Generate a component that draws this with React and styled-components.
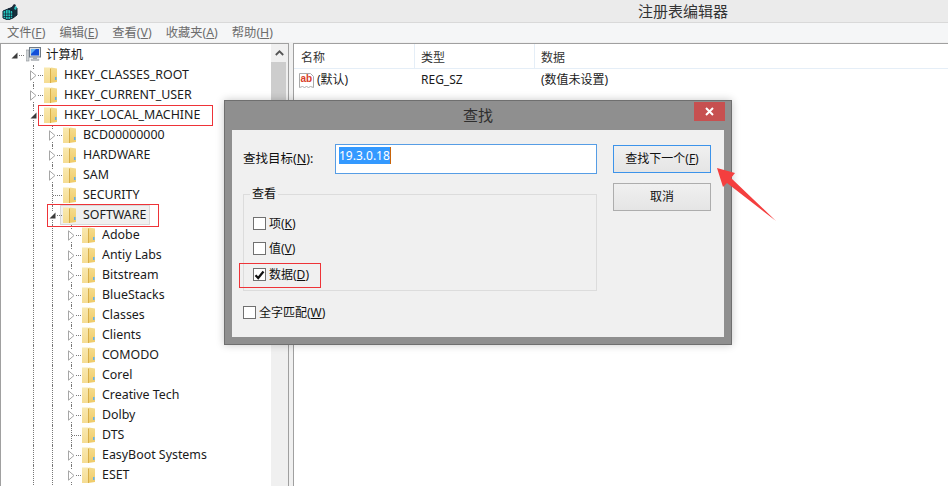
import React from 'react'
import styled, { createGlobalStyle } from 'styled-components'

const GlobalStyle = createGlobalStyle`
  html, body { margin: 0; padding: 0; background: #fff; }
  body { font-family: "Noto Sans", "Noto Sans CJK SC", sans-serif; }
`

const FONT = '"Noto Sans", "Noto Sans CJK SC", sans-serif'

const Screen = styled.div`
  position: relative;
  width: 948px;
  height: 486px;
  overflow: hidden;
  display: flex;
  flex-direction: column;
  background: #f0f0f0;
  font: 13px/18px ${FONT};
  color: #1a1a1a;
`

const TitleBar = styled.div`
  height: 22px;
  flex: none;
  display: flex;
  align-items: center;
  padding-left: 2px;
  background: #ebebeb;
  border-bottom: 1px solid #d9d9d9;
`

const Title = styled.div`
  margin-left: 620px;
  font-size: 15px;
  color: #333;
`

const MenuBar = styled.div`
  height: 19px;
  flex: none;
  display: flex;
  align-items: center;
  gap: 14px;
  padding-left: 7px;
  background: #f5f6f7;
  color: #6d6d6d;
  font-size: 12.3px;
`

const Panes = styled.div`
  flex: 1;
  min-height: 0;
  margin-top: 1px;
  display: flex;
`

const TreePane = styled.div`
  width: 287px;
  flex: none;
  display: flex;
  background: #fff;
  border-left: 1px solid #a0a0a0;
  border-top: 1px solid #a0a0a0;
  border-right: 1px solid #a0a0a0;
`

const Tree = styled.div`
  flex: 1;
  min-width: 0;
  padding-top: 1px;
  overflow: hidden;
`

const Row = styled.div`
  height: 20px;
  display: flex;
  align-items: stretch;
  padding-left: ${p => (p.$depth > 0 ? 23 : 4)}px;
`

const Guide = styled.span`
  position: relative;
  width: 19px;
  flex: none;
  &::before {
    content: '';
    position: absolute;
    left: 9px;
    top: 0;
    bottom: 0;
    border-left: 1px dotted #777;
  }
`

const Toggle = styled.span`
  position: relative;
  width: 19px;
  flex: none;
  display: flex;
  align-items: center;
  justify-content: center;
  &::before {
    content: '';
    position: absolute;
    left: 9px;
    top: ${p => (p.$line ? 0 : '50%')};
    bottom: ${p => (p.$line ? 0 : '50%')};
    border-left: 1px dotted #777;
  }
  &::after {
    content: '';
    position: absolute;
    left: 10px;
    right: 0;
    top: 50%;
    border-top: 1px dotted #777;
  }
  svg {
    position: relative;
    z-index: 1;
    background: #fff;
  }
`

const Item = styled.span`
  display: inline-flex;
  align-items: center;
  gap: 7px;
  box-sizing: border-box;
  height: 20px;
  margin-left: -2px;
  padding: 0 4px 0 3px;
  font-size: 12.4px;
  color: #1a1a1a;
  background: ${p => (p.$selected ? '#f0f0f0' : 'transparent')};
  outline: ${p => (p.$selected ? '1px solid #d9d9d9' : 'none')};
  outline-offset: -1px;
  white-space: nowrap;
`

const RootItem = styled(Item)`
  gap: 5px;
  margin-left: 0;
  padding: 0;
`

const Scrollbar = styled.div`
  width: 17px;
  flex: none;
  display: flex;
  flex-direction: column;
  background: #f0f0f0;
`

const ScrollUp = styled.div`
  height: 18px;
  display: flex;
  align-items: center;
  justify-content: center;
`

const ScrollThumb = styled.div`
  width: 15px;
  height: 140px;
  background: #cdcdcd;
`

const Splitter = styled.div`
  width: 4px;
  flex: none;
  background: #f0f0f0;
`

const ListPane = styled.div`
  flex: 1;
  min-width: 0;
  background: #fff;
  border-left: 1px solid #a0a0a0;
  border-top: 1px solid #a0a0a0;
`

const ListHeader = styled.div`
  height: 24px;
  display: grid;
  grid-template-columns: 121px 120px 1fr;
  border-bottom: 1px solid #e5eef7;
`

const HeaderCell = styled.div`
  display: flex;
  align-items: center;
  padding: 4px 0 0 6px;
  font-size: 12px;
  color: #333;
  border-right: ${p => (p.$last ? 'none' : '1px solid #e5eef7')};
  &:first-child {
    padding-left: 7px;
  }
`

const ListRow = styled.div`
  height: 21px;
  display: grid;
  grid-template-columns: 121px 120px 1fr;
  font-size: 12px;
`

const NameCell = styled.div`
  display: flex;
  align-items: center;
  gap: 2px;
  padding-left: 5px;
`

const ValueCell = styled.div`
  display: flex;
  align-items: center;
  padding-left: 6px;
`

const Dialog = styled.div`
  position: absolute;
  left: 224px;
  top: 100px;
  width: 508px;
  height: 245px;
  box-sizing: border-box;
  display: flex;
  flex-direction: column;
  background: #8f8f8f;
  border: 1px solid #6f6f6f;
  box-shadow: 0 0 8px rgba(0, 0, 0, 0.22);
`

const DialogTitle = styled.div`
  position: relative;
  height: 29px;
  box-sizing: border-box;
  flex: none;
  display: flex;
  align-items: center;
  justify-content: center;
  padding-bottom: 2px;
  font-size: 15px;
  color: #2e2e2e;
`

const CloseButton = styled.div`
  position: absolute;
  right: 6px;
  top: 1px;
  width: 31px;
  height: 19px;
  display: flex;
  align-items: center;
  justify-content: center;
  background: #c75050;
`

const DialogBody = styled.div`
  flex: 1;
  margin: 0 7px 7px;
  padding: 14px 13px 0 11px;
  display: grid;
  grid-template-columns: 354px 98px;
  column-gap: 16px;
  align-content: start;
  background: #f0f0f0;
`

const SearchRow = styled.div`
  display: flex;
  align-items: center;
`

const SearchLabel = styled.label`
  width: 92px;
  flex: none;
  font-size: 12.5px;
  color: #111;
`

const SearchBox = styled.div`
  flex: 1;
  height: 30px;
  box-sizing: border-box;
  padding: 2px 3px;
  background: #fff;
  border: 1px solid #569de5;
  font-size: 12px;
  line-height: 17px;
`

const Selected = styled.span`
  display: inline-block;
  height: 17px;
  background: #3399ff;
  color: #fff;
  border-right: 1px solid #c8640a;
`

const Group = styled.div`
  position: relative;
  height: 97px;
  box-sizing: border-box;
  margin-top: 20px;
  padding: 22px 0 0 9px;
  border: 1px solid #dcdcdc;
`

const GroupLegend = styled.span`
  position: absolute;
  left: 6px;
  top: -9px;
  padding: 0 2px;
  background: #f0f0f0;
  font-size: 12px;
  line-height: 16px;
  color: #111;
`

const CheckRow = styled.div`
  display: flex;
  align-items: center;
  gap: 3px;
  height: 13px;
  margin-top: ${p => p.$top || 0}px;
  font-size: 12px;
  color: #111;
`

const CheckBox = styled.span`
  width: 13px;
  height: 13px;
  flex: none;
  box-sizing: border-box;
  display: flex;
  align-items: center;
  justify-content: center;
  background: #fff;
  border: 1px solid #707070;
`

const Buttons = styled.div`
  display: flex;
  flex-direction: column;
  gap: 10px;
  padding-top: 1px;
`

const Button = styled.div`
  height: 28px;
  box-sizing: border-box;
  display: flex;
  align-items: center;
  justify-content: center;
  font-size: 12px;
  color: #111;
  background: linear-gradient(#f0f0f0, #e5e5e5);
  border: ${p => (p.$primary ? '1px solid #3c93ea' : '1px solid #adadad')};
`

const Callout = styled.div`
  position: absolute;
  left: ${p => p.$x}px;
  top: ${p => p.$y}px;
  width: ${p => p.$w}px;
  height: ${p => p.$h}px;
  box-sizing: border-box;
  border: 1px solid #ee3338;
`

const Arrow = styled.svg`
  position: absolute;
  left: 712px;
  top: 162px;
`

const AppIcon = () => (
  <svg width="16" height="17" viewBox="0 0 16 17">
    <path d="M1 8l5-2 5 2v7l-5 2-5-2z" fill="#22c4bc" stroke="#123" strokeWidth="1" />
    <path d="M6 6l5-2 4 1v7l-4 3V8z" fill="#14303c" stroke="#123" strokeWidth="1" />
    <path d="M1 11l10 0M6 6v11M3.5 7v9M8.5 7v9M1 13.5h10" stroke="#123" strokeWidth="0.7" />
    <path d="M9 5l3-4 2 1-2 4z" fill="#1b2a3a" />
    <path d="M13 3l2 1-1 3-2-1z" fill="#2bb" />
  </svg>
)

const Computer = () => (
  <svg width="15" height="16" viewBox="0 0 15 16" style={{ marginLeft: 2 }}>
    <rect x="0" y="3" width="3" height="11" fill="#cfd3d6" stroke="#8a8f93" strokeWidth="0.6" />
    <rect x="3.5" y="0.5" width="11" height="9.5" fill="#d9dde0" stroke="#6f7a85" />
    <rect x="5" y="2" width="8" height="6.5" fill="#1450d8" />
    <path d="M5 2h5l-5 5z" fill="#5fb0f5" />
    <rect x="7" y="10" width="4" height="2" fill="#a9afb5" />
    <rect x="5" y="12" width="8" height="1.6" fill="#c5c9cd" stroke="#8f959a" strokeWidth="0.4" />
  </svg>
)

const Folder = () => (
  <svg width="13" height="16" viewBox="0 0 13 16">
    <defs>
      <linearGradient id="folderBack" x1="0" y1="0" x2="0" y2="1">
        <stop offset="0" stopColor="#f9e9b0" />
        <stop offset="1" stopColor="#f5dc92" />
      </linearGradient>
      <linearGradient id="folderFront" x1="0" y1="0" x2="0" y2="1">
        <stop offset="0" stopColor="#f5dc8e" />
        <stop offset="1" stopColor="#efcb68" />
      </linearGradient>
    </defs>
    <path d="M0 0.5h6l1 1v14.5h-7z" fill="url(#folderBack)" />
    <path d="M6 2l1-1.5 6 1v13.5l-7 1z" fill="url(#folderFront)" />
    <path d="M6.5 1.5v14.5" stroke="#d7ae4a" strokeWidth="1" />
    <rect x="11" y="10" width="1.5" height="3" fill="#62b0e6" />
  </svg>
)

const Collapsed = () => (
  <svg width="7" height="11" viewBox="0 0 7 11">
    <path d="M0.5 0.8L6 5.5 0.5 10.2z" fill="#fff" stroke="#a6a6a6" />
  </svg>
)

const Expanded = () => (
  <svg width="7" height="7" viewBox="0 0 7 7">
    <path d="M6.5 0.5V6.5H0.5z" fill="#3c3c3c" />
  </svg>
)

const Chevron = () => (
  <svg width="9" height="6" viewBox="0 0 9 6">
    <path d="M0.8 5L4.5 1.3 8.2 5" fill="none" stroke="#555" strokeWidth="1.8" />
  </svg>
)

const Check = () => (
  <svg width="11" height="10" viewBox="0 0 11 10">
    <path d="M1.5 5.2L4.2 8 9.5 1.5" fill="none" stroke="#111" strokeWidth="2.2" />
  </svg>
)

const StringIcon = () => (
  <svg width="16" height="16" viewBox="0 0 16 16">
    <path d="M0.5 1.5h11l3 3v11l-3-1-2 1-2-1-2 1-2-1-3 1z" fill="#fff" stroke="#aaa" />
    <text x="1.5" y="10" fontFamily="Liberation Sans, sans-serif" fontSize="10" fontWeight="700" fill="#d8402a">ab</text>
  </svg>
)

const X = () => (
  <svg width="9" height="9" viewBox="0 0 9 9">
    <path d="M1 1l7 7M8 1L1 8" stroke="#fff" strokeWidth="2" />
  </svg>
)

const rows = [
  { name: 'HKEY_CLASSES_ROOT', depth: 1, kids: true },
  { name: 'HKEY_CURRENT_USER', depth: 1, kids: true },
  { name: 'HKEY_LOCAL_MACHINE', depth: 1, open: true },
  { name: 'BCD00000000', depth: 2, kids: true },
  { name: 'HARDWARE', depth: 2, kids: true },
  { name: 'SAM', depth: 2, kids: true },
  { name: 'SECURITY', depth: 2 },
  { name: 'SOFTWARE', depth: 2, open: true, selected: true },
  { name: 'Adobe', depth: 3, kids: true },
  { name: 'Antiy Labs', depth: 3, kids: true },
  { name: 'Bitstream', depth: 3, kids: true },
  { name: 'BlueStacks', depth: 3, kids: true },
  { name: 'Classes', depth: 3, kids: true },
  { name: 'Clients', depth: 3, kids: true },
  { name: 'COMODO', depth: 3, kids: true },
  { name: 'Corel', depth: 3, kids: true },
  { name: 'Creative Tech', depth: 3, kids: true },
  { name: 'Dolby', depth: 3, kids: true },
  { name: 'DTS', depth: 3 },
  { name: 'EasyBoot Systems', depth: 3, kids: true },
  { name: 'ESET', depth: 3, kids: true },
]

const menus = [
  ['文件(', 'F', ')'],
  ['编辑(', 'E', ')'],
  ['查看(', 'V', ')'],
  ['收藏夹(', 'A', ')'],
  ['帮助(', 'H', ')'],
]

function TreeRow ({ row }) {
  const guides = Array.from({ length: row.depth - 1 })
  return (
    <Row $depth={row.depth}>
      {guides.map((_, i) => <Guide key={i} />)}
      <Toggle $line>
        {row.open ? <Expanded /> : row.kids ? <Collapsed /> : null}
      </Toggle>
      <Item $selected={row.selected}>
        <Folder />
        {row.name}
      </Item>
    </Row>
  )
}

function App () {
  return (
    <>
      <GlobalStyle />
      <Screen>
        <TitleBar>
          <AppIcon />
          <Title>注册表编辑器</Title>
        </TitleBar>
        <MenuBar>
          {menus.map(([a, u, b]) => (
            <span key={u}>{a}<u>{u}</u>{b}</span>
          ))}
        </MenuBar>
        <Panes>
          <TreePane>
            <Tree>
              <Row $depth={0}>
                <Toggle><Expanded /></Toggle>
                <RootItem><Computer />计算机</RootItem>
              </Row>
              {rows.map(row => <TreeRow key={row.name} row={row} />)}
            </Tree>
            <Scrollbar>
              <ScrollUp><Chevron /></ScrollUp>
              <ScrollThumb />
            </Scrollbar>
          </TreePane>
          <Splitter />
          <ListPane>
            <ListHeader>
              <HeaderCell>名称</HeaderCell>
              <HeaderCell>类型</HeaderCell>
              <HeaderCell $last>数据</HeaderCell>
            </ListHeader>
            <ListRow>
              <NameCell><StringIcon />(默认)</NameCell>
              <ValueCell>REG_SZ</ValueCell>
              <ValueCell>(数值未设置)</ValueCell>
            </ListRow>
          </ListPane>
        </Panes>

        <Dialog>
          <DialogTitle>
            查找
            <CloseButton><X /></CloseButton>
          </DialogTitle>
          <DialogBody>
            <div>
              <SearchRow>
                <SearchLabel>查找目标(<u>N</u>):</SearchLabel>
                <SearchBox><Selected>19.3.0.18</Selected></SearchBox>
              </SearchRow>
              <Group>
                <GroupLegend>查看</GroupLegend>
                <CheckRow><CheckBox /><span>项(<u>K</u>)</span></CheckRow>
                <CheckRow $top={12}><CheckBox /><span>值(<u>V</u>)</span></CheckRow>
                <CheckRow $top={13}><CheckBox><Check /></CheckBox><span>数据(<u>D</u>)</span></CheckRow>
              </Group>
              <CheckRow $top={15}><CheckBox /><span>全字匹配(<u>W</u>)</span></CheckRow>
            </div>
            <Buttons>
              <Button $primary><span>查找下一个(<u>F</u>)</span></Button>
              <Button>取消</Button>
            </Buttons>
          </DialogBody>
        </Dialog>

        <Callout $x={38} $y={105} $w={175} $h={21} />
        <Callout $x={47} $y={204} $w={112} $h={23} />
        <Callout $x={239} $y={263} $w={82} $h={25} />
        <Arrow width="70" height="64" viewBox="0 0 70 64">
          <path d="M5 6L23 11 19 16 64 59 15 21 11 25z" fill="#f43f3f" />
        </Arrow>
      </Screen>
    </>
  )
}

export default App
